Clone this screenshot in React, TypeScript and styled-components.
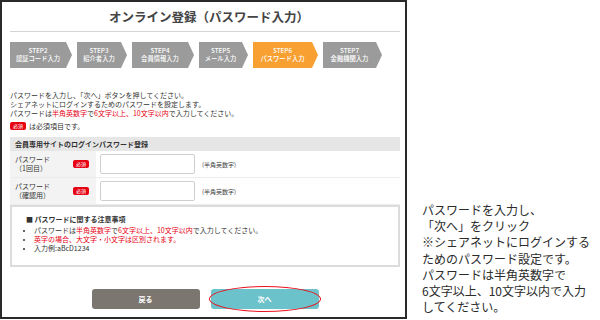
import React from 'react';
import styled, { createGlobalStyle } from 'styled-components';

const GlobalStyle = createGlobalStyle`
    body {
        margin: 0;
        background: #fff;
        font-family: "Noto Sans CJK JP", "Noto Sans", sans-serif;
        color: #333;
    }
`;

const Page = styled.div`
    display: flex;
    width: 600px;
    height: 320px;
    overflow: hidden;
`;

const Frame = styled.div`
    box-sizing: border-box;
    width: 407px;
    height: 319px;
    border: 2px solid #2a2a2a;
    padding: 0 5px 0 8px;
    display: flex;
    flex-direction: column;
    flex-shrink: 0;
`;

const Title = styled.div`
    height: 29px;
    display: flex;
    align-items: center;
    justify-content: center;
    padding-left: 8px;
    font-size: 12.5px;
    font-weight: 700;
    color: #444;
    border-bottom: 1px solid #d4d4d4;
`;

const Steps = styled.div`
    display: flex;
    gap: 5px;
    margin-top: 10px;
`;

const Step = styled.div<{ $w: number; $active?: boolean }>`
    box-sizing: border-box;
    width: ${p => p.$w}px;
    height: 26px;
    padding-right: 6px;
    background: ${p => (p.$active ? '#f8a032' : '#9b9b9b')};
    clip-path: polygon(0 0, calc(100% - 6px) 0, 100% 50%, calc(100% - 6px) 100%, 0 100%);
    color: #fff;
    font-size: 6.3px;
    font-weight: 500;
    line-height: 8px;
    display: flex;
    flex-direction: column;
    align-items: center;
    justify-content: center;
    white-space: nowrap;
`;

const Intro = styled.div`
    margin-top: 23px;
    font-size: 7px;
    line-height: 9px;
`;

const Red = styled.span`
    color: #e60012;
`;

const RequiredLine = styled.div`
    display: flex;
    align-items: center;
    gap: 3px;
    margin-top: 3px;
    font-size: 7px;
`;

const Badge = styled.span`
    display: inline-block;
    background: #e60012;
    color: #fff;
    font-size: 5px;
    line-height: 8px;
    padding: 0 3px;
    border-radius: 2px;
`;

const Table = styled.div`
    margin-top: 6px;
`;

const TableHeader = styled.div`
    height: 14px;
    background: #e6e6e6;
    display: flex;
    align-items: center;
    padding-left: 5px;
    font-size: 7px;
    font-weight: 700;
`;

const Row = styled.div`
    display: grid;
    grid-template-columns: 86px 1fr;
    height: 26px;
    border-bottom: 1px solid #ececec;
`;

const LabelCell = styled.div`
    background: #f3f3f3;
    display: flex;
    align-items: center;
    justify-content: space-between;
    padding: 0 7px 0 5px;
    font-size: 7px;
    line-height: 9px;
`;

const FieldCell = styled.div`
    display: flex;
    align-items: center;
    gap: 7px;
    padding-left: 4px;
    font-size: 6px;
    color: #444;
`;

const Input = styled.div`
    box-sizing: border-box;
    width: 95px;
    height: 20px;
    border: 1px solid #cfcfcf;
    border-radius: 2px;
    background: #fff;
`;

const Note = styled.div`
    box-sizing: border-box;
    height: 62px;
    border: 2px solid #dcdcdc;
    padding: 8px 14px 0;
    font-size: 7px;
    line-height: 9px;
`;

const NoteTitle = styled.div`
    font-weight: 700;
    margin-bottom: 2px;
`;

const Bullets = styled.ul`
    margin: 0;
    padding-left: 8px;
    li::marker {
        font-size: 6px;
    }
`;

const Buttons = styled.div`
    display: flex;
    justify-content: center;
    gap: 11px;
    margin-top: 22px;
`;

const Button = styled.div<{ $color: string }>`
    position: relative;
    width: 108px;
    height: 20px;
    border-radius: 3px;
    background: ${p => p.$color};
    color: #fff;
    font-size: 7px;
    font-weight: 700;
    display: flex;
    align-items: center;
    justify-content: center;
`;

const Ellipse = styled.div`
    position: absolute;
    inset: -3px -2px -3px -2px;
    border: 1.5px solid #e8141e;
    border-radius: 50%;
`;

const Side = styled.div`
    padding: 202px 0 0 15px;
    font-size: 12px;
    line-height: 16.2px;
    color: #2b2b2b;
    white-space: nowrap;
`;

const steps = [
    { no: 'STEP2', label: '認証コード入力', w: 62 },
    { no: 'STEP3', label: '紹介者入力', w: 50 },
    { no: 'STEP4', label: '会員情報入力', w: 62 },
    { no: 'STEP5', label: 'メール入力', w: 49 },
    { no: 'STEP6', label: 'パスワード入力', w: 65, active: true },
    { no: 'STEP7', label: '金融機関入力', w: 59 },
];

const PasswordRow: React.FC<{ sub: string }> = ({ sub }) => (
    <Row>
        <LabelCell>
            <div>
                パスワード
                <br />
                {sub}
            </div>
            <Badge>必須</Badge>
        </LabelCell>
        <FieldCell>
            <Input />
            (半角英数字)
        </FieldCell>
    </Row>
);

export default function App() {
    return (
        <Page>
            <GlobalStyle />
            <Frame>
                <Title>オンライン登録（パスワード入力）</Title>
                <Steps>
                    {steps.map(s => (
                        <Step key={s.no} $w={s.w} $active={s.active}>
                            <span>{s.no}</span>
                            <span>{s.label}</span>
                        </Step>
                    ))}
                </Steps>
                <Intro>
                    パスワードを入力し、「次へ」ボタンを押してください。
                    <br />
                    シェアネットにログインするためのパスワードを設定します。
                    <br />
                    パスワードは<Red>半角英数字</Red>で<Red>6文字以上、10文字以内</Red>で入力してください。
                </Intro>
                <RequiredLine>
                    <Badge>必須</Badge>
                    は必須項目です。
                </RequiredLine>
                <Table>
                    <TableHeader>会員専用サイトのログインパスワード登録</TableHeader>
                    <PasswordRow sub="（1回目）" />
                    <PasswordRow sub="（確認用）" />
                </Table>
                <Note>
                    <NoteTitle>■ パスワードに関する注意事項</NoteTitle>
                    <Bullets>
                        <li>
                            パスワードは<Red>半角英数字</Red>で<Red>6文字以上、10文字以内</Red>で入力してください。
                        </li>
                        <li>
                            <Red>英字の場合、大文字・小文字は区別されます。</Red>
                        </li>
                        <li>入力例:aBcD1234</li>
                    </Bullets>
                </Note>
                <Buttons>
                    <Button $color="#7b766f">戻る</Button>
                    <Button $color="#6cc2ca">
                        次へ
                        <Ellipse />
                    </Button>
                </Buttons>
            </Frame>
            <Side>
                パスワードを入力し、
                <br />
                「次へ」をクリック
                <br />
                ※シェアネットにログインする
                <br />
                ためのパスワード設定です。
                <br />
                パスワードは半角英数字で
                <br />
                6文字以上、10文字以内で入力
                <br />
                してください。
            </Side>
        </Page>
    );
}
